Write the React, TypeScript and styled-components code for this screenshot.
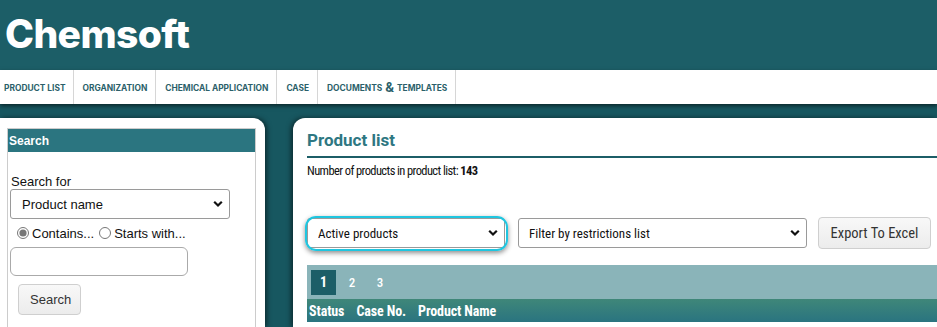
import React from "react";
import styled, { createGlobalStyle } from "styled-components";

const GlobalStyle = createGlobalStyle`
  html, body {
    margin: 0;
    padding: 0;
    background: #175760;
    overflow: hidden;
  }
  * { box-sizing: border-box; }
`;

const narrow = `"Roboto Condensed", "DejaVu Sans Condensed", "Liberation Sans Narrow", Roboto, sans-serif`;

const Page = styled.div`
  width: 937px;
  height: 327px;
  background: #175760;
  overflow: hidden;
  display: flex;
  flex-direction: column;
`;

const Header = styled.header`
  height: 70px;
  background: #1c5e67;
  padding-left: 5px;
  display: flex;
  align-items: center;
`;

const Logo = styled.h1`
  margin: 0;
  font-family: Inter, Roboto, sans-serif;
  font-weight: 800;
  font-size: 39px;
  letter-spacing: -0.6px;
  color: #ffffff;
  line-height: 1;
  margin-top: -3px;
`;

const Nav = styled.nav`
  height: 34px;
  background: #ffffff;
  display: flex;
  box-shadow: 0 2px 4px rgba(0, 0, 0, 0.55);
  position: relative;
  z-index: 1;
`;

const NavItem = styled.a<{ first?: boolean }>`
  display: flex;
  align-items: center;
  padding: 2px ${(p) => (p.first ? "7px" : "8px")} 0 ${(p) => (p.first ? "4px" : "9px")};
  border-right: 1px solid #d6d6d6;
  font-family: Inter, Roboto, sans-serif;
  font-weight: 700;
  font-size: 8.4px;
  text-transform: uppercase;
  color: #2b5f6a;
  white-space: nowrap;
  cursor: pointer;
`;

const Amp = styled.span`
  font-size: 13px;
  margin: 0 3px 2px;
  line-height: 1;
`;

const Main = styled.main`
  flex: 1;
  display: flex;
  gap: 28px;
  padding-top: 14px;
`;

const Sidebar = styled.aside`
  width: 265px;
  flex-shrink: 0;
  background: #ffffff;
  border-radius: 0 12px 0 0;
  padding: 10px 9px 0 7px;
  box-shadow: 2px 0 5px rgba(0, 0, 0, 0.5);
`;

const Box = styled.div`
  border: 1px solid #cccccc;
  border-bottom: none;
  height: 100%;
  font-family: "Liberation Sans", Arial, sans-serif;
`;

const BoxHeader = styled.div`
  height: 23px;
  background: #2b7580;
  color: #ffffff;
  font-weight: 700;
  font-size: 12px;
  display: flex;
  align-items: center;
  padding-left: 1px;
`;

const BoxBody = styled.div`
  padding: 22px 2px 0 2px;
`;

const Label = styled.div`
  font-size: 13px;
  line-height: 15px;
  color: #111;
  margin-left: 1px;
`;

const SelectWrap = styled.div<{ w: number; h: number; ml?: number; focused?: boolean }>`
  position: relative;
  width: ${(p) => p.w}px;
  height: ${(p) => p.h}px;
  margin-left: ${(p) => p.ml ?? 0}px;
  flex-shrink: 0;
  ${(p) =>
    p.focused
      ? `
  &::after {
    content: "";
    position: absolute;
    inset: -2px -3px -3px -2px;
    border: 2.5px solid #1fc6e0;
    border-radius: 11px;
    box-shadow: 0 2px 5px rgba(0, 0, 0, 0.45);
    pointer-events: none;
  }`
      : ""}
`;

const Select = styled.select<{ font?: string; pl?: number }>`
  appearance: none;
  width: 100%;
  height: 100%;
  border: 1px solid #9a9a9a;
  border-radius: 3px;
  background: #ffffff;
  color: #111;
  font-family: ${(p) => p.font || `"Liberation Sans", Arial, sans-serif`};
  font-size: 13px;
  padding: 0 0 0 ${(p) => p.pl ?? 11}px;
  outline: none;
`;

const Chevron = styled.svg`
  position: absolute;
  right: 7px;
  top: 50%;
  transform: translateY(-50%);
  pointer-events: none;
`;

const RadioRow = styled.div`
  display: flex;
  align-items: center;
  height: 22px;
  margin: 3px 0 3px 7px;
  font-size: 13px;
  color: #111;
`;

const Radio = styled.input`
  margin: 0 3px 0 0;
  width: 12px;
  height: 12px;
  accent-color: #777;
`;

const RadioLabel = styled.label`
  display: flex;
  align-items: center;
  margin-right: 5px;
`;

const TextInput = styled.input`
  display: block;
  width: 178px;
  height: 29px;
  border: 1px solid #aaaaaa;
  border-radius: 6px;
  outline: none;
`;

const GreyButton = styled.button<{ font?: string }>`
  height: ${(p) => (p.font ? "32px" : "31px")};
  padding: 0 11px;
  border: 1px solid #cfcfcf;
  border-radius: 4px;
  background: linear-gradient(#f8f8f8, #ececec);
  color: #333;
  font-family: ${(p) => p.font || `"Liberation Sans", Arial, sans-serif`};
  font-size: 13px;
  cursor: pointer;
`;

const SearchButton = styled(GreyButton)`
  margin: 8px 0 0 8px;
  width: 63px;
`;

const Content = styled.section`
  flex: 1;
  background: #ffffff;
  border-radius: 12px 0 0 0;
  padding: 12px 0 0 14px;
  box-shadow: -2px 0 5px rgba(0, 0, 0, 0.5);
  font-family: ${narrow};
`;

const Title = styled.h2`
  margin: 0;
  font-family: Roboto, sans-serif;
  font-weight: 700;
  font-size: 17px;
  line-height: 20px;
  color: #2e7782;
  padding-bottom: 6px;
  border-bottom: 2px solid #1c5e67;
`;

const Count = styled.p`
  margin: 6px 0 0;
  font-size: 12.5px;
  letter-spacing: -0.6px;
  line-height: 14px;
  color: #111;
  b { font-weight: 700; }
`;

const Toolbar = styled.div`
  display: flex;
  align-items: center;
  margin-top: 39px;
  height: 32px;
`;

const ExportButton = styled(GreyButton)`
  margin-left: 11px;
  width: 113px;
  padding: 0;
  font-size: 14.5px;
`;

const Table = styled.div`
  margin-top: 16px;
`;

const Pager = styled.div`
  height: 34px;
  background: #8ab4b9;
  display: flex;
  align-items: center;
  padding-left: 4px;
`;

const PageNo = styled.span<{ active?: boolean }>`
  width: ${(p) => (p.active ? "25px" : "28px")};
  height: 25px;
  display: flex;
  align-items: center;
  justify-content: center;
  background: ${(p) => (p.active ? "#1c5e67" : "transparent")};
  color: #ffffff;
  font-weight: ${(p) => (p.active ? 700 : 500)};
  font-size: ${(p) => (p.active ? "14px" : "13px")};
  margin-right: ${(p) => (p.active ? "2px" : "0")};
`;

const HeadRow = styled.div`
  height: 23px;
  background: linear-gradient(#3f8779, #2a7480);
  display: flex;
  align-items: center;
  padding-left: 2px;
  gap: 12px;
  color: #ffffff;
  font-weight: 700;
  font-size: 14px;
  letter-spacing: -0.1px;
`;

const ChevronIcon = () => (
  <Chevron width="10" height="7" viewBox="0 0 10 7">
    <path d="M1.2 1.2 L5 5 L8.8 1.2" stroke="#111" strokeWidth="2.2" fill="none" />
  </Chevron>
);

const navItems = ["Product list", "Organization", "Chemical application", "Case"];

export default function App() {
  return (
    <Page>
      <GlobalStyle />
      <Header>
        <Logo>Chemsoft</Logo>
      </Header>
      <Nav>
        {navItems.map((n, i) => (
          <NavItem key={n} first={i === 0}>
            {n}
          </NavItem>
        ))}
        <NavItem>
          Documents<Amp>&amp;</Amp>Templates
        </NavItem>
      </Nav>
      <Main>
        <Sidebar>
          <Box>
            <BoxHeader>Search</BoxHeader>
            <BoxBody>
              <Label>Search for</Label>
              <SelectWrap w={220} h={30}>
                <Select defaultValue="name">
                  <option value="name">Product name</option>
                </Select>
                <ChevronIcon />
              </SelectWrap>
              <RadioRow>
                <RadioLabel>
                  <Radio type="radio" name="mode" defaultChecked />
                  Contains...
                </RadioLabel>
                <RadioLabel>
                  <Radio type="radio" name="mode" />
                  Starts with...
                </RadioLabel>
              </RadioRow>
              <TextInput type="text" />
              <SearchButton>Search</SearchButton>
            </BoxBody>
          </Box>
        </Sidebar>
        <Content>
          <Title>Product list</Title>
          <Count>
            Number of products in product list: <b>143</b>
          </Count>
          <Toolbar>
            <SelectWrap w={198} h={30} focused>
              <Select font={narrow} pl={10} defaultValue="active">
                <option value="active">Active products</option>
              </Select>
              <ChevronIcon />
            </SelectWrap>
            <SelectWrap w={289} h={30} ml={13}>
              <Select font={narrow} pl={10} defaultValue="none">
                <option value="none">Filter by restrictions list</option>
              </Select>
              <ChevronIcon />
            </SelectWrap>
            <ExportButton font={narrow}>Export To Excel</ExportButton>
          </Toolbar>
          <Table>
            <Pager>
              <PageNo active>1</PageNo>
              <PageNo>2</PageNo>
              <PageNo>3</PageNo>
            </Pager>
            <HeadRow>
              <span>Status</span>
              <span>Case No.</span>
              <span>Product Name</span>
            </HeadRow>
          </Table>
        </Content>
      </Main>
    </Page>
  );
}
